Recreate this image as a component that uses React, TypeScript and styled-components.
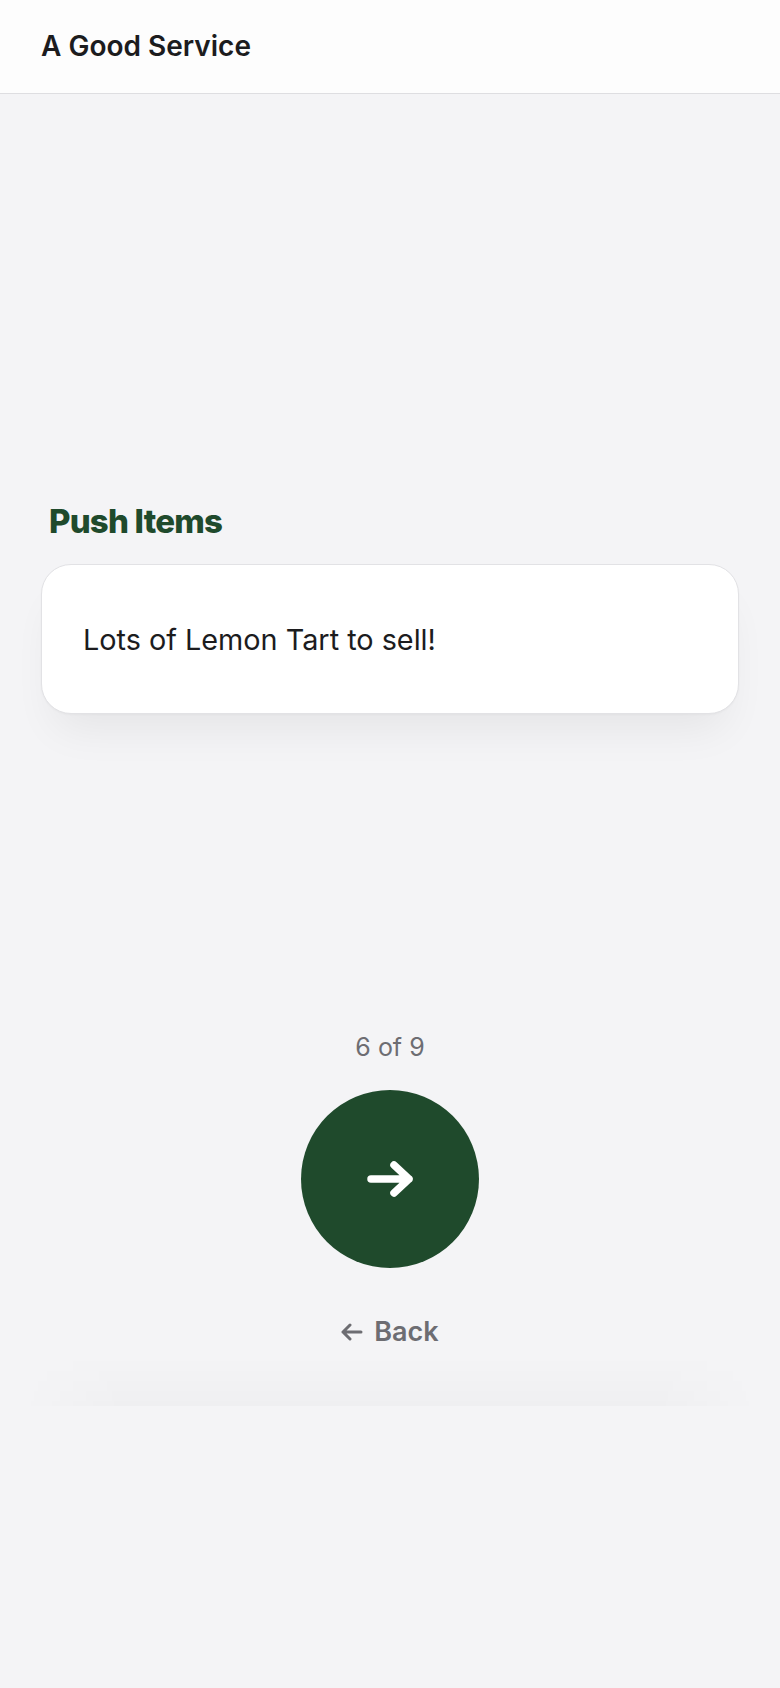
import * as React from 'react';
import styled, { createGlobalStyle } from 'styled-components';

const GlobalStyle = createGlobalStyle`
  html, body {
    margin: 0;
    padding: 0;
    background: #f4f4f6;
  }
  body {
    font-family: Inter, "Noto Sans", "Liberation Sans", sans-serif;
    -webkit-font-smoothing: antialiased;
  }
  * {
    box-sizing: border-box;
  }
`;

const Page = styled.div`
  min-height: 100vh;
  background: #f4f4f6;
  display: flex;
  flex-direction: column;
`;

const Header = styled.header`
  height: 94px;
  display: flex;
  align-items: center;
  padding: 0 41px 2px;
  background: #fdfdfd;
  border-bottom: 1px solid #dedee1;
`;

const Brand = styled.h1`
  margin: 0;
  font-size: 28px;
  font-weight: 600;
  color: #1c1c1e;
`;

const Main = styled.main`
  display: flex;
  flex-direction: column;
  padding: 0 41px;
`;

const Section = styled.section`
  margin-top: 407px;
`;

const SectionTitle = styled.h2`
  margin: 0 0 23px 8px;
  font-size: 33px;
  line-height: 40px;
  font-weight: 800;
  color: #1f4a2c;
  letter-spacing: -0.8px;
`;

const Card = styled.div`
  height: 150px;
  display: flex;
  align-items: center;
  padding: 0 41px;
  background: #ffffff;
  border: 1px solid #e2e2e5;
  border-radius: 30px;
  box-shadow:
    0 1px 2px rgba(0, 0, 0, 0.03),
    0 28px 44px -14px rgba(0, 0, 0, 0.065);
`;

const CardText = styled.p`
  margin: 0;
  font-size: 28.8px;
  line-height: 35px;
  font-weight: 400;
  color: #1c1c1e;
`;

const Stepper = styled.div`
  margin-top: 318px;
  display: flex;
  flex-direction: column;
  align-items: center;
`;

const Count = styled.div`
  font-size: 25px;
  line-height: 30px;
  color: #6d6d72;
`;

const NextButton = styled.button`
  margin-top: 28px;
  width: 178px;
  height: 178px;
  border: none;
  border-radius: 50%;
  background: #1f4a2c;
  display: flex;
  align-items: center;
  justify-content: center;
  padding: 0;
  cursor: pointer;
`;

const BackButton = styled.button`
  margin-top: 47px;
  display: flex;
  align-items: center;
  gap: 11px;
  border: none;
  background: none;
  padding: 0;
  font-family: inherit;
  font-size: 27px;
  line-height: 33px;
  font-weight: 600;
  color: #6d6d72;
  cursor: pointer;
`;

const ShadowEdge = styled.div`
  margin: 8px -20px 0;
  height: 50px;
  background: linear-gradient(180deg, rgba(0, 0, 0, 0) 0%, rgba(0, 0, 0, 0.018) 100%);
  -webkit-mask-image: linear-gradient(90deg, transparent 0%, #000 14%, #000 86%, transparent 100%);
  mask-image: linear-gradient(90deg, transparent 0%, #000 14%, #000 86%, transparent 100%);
`;

const ArrowRight = () => (
  <svg width="60" height="60" viewBox="0 0 60 60" fill="none">
    <path
      d="M11 30h38M34 16l15 14-15 14"
      stroke="#ffffff"
      strokeWidth="7.5"
      strokeLinecap="round"
      strokeLinejoin="round"
    />
  </svg>
);

const ArrowLeft = () => (
  <svg width="22" height="20" viewBox="0 0 22 20" fill="none">
    <path
      d="M20 10H2M9 3L2 10l7 7"
      stroke="#6d6d72"
      strokeWidth="3"
      strokeLinecap="round"
      strokeLinejoin="round"
    />
  </svg>
);

export default function App() {
  const step = 6;
  const total = 9;

  return (
    <>
      <GlobalStyle />
      <Page>
        <Header>
          <Brand>A Good Service</Brand>
        </Header>
        <Main>
          <Section>
            <SectionTitle>Push Items</SectionTitle>
            <Card>
              <CardText>Lots of Lemon Tart to sell!</CardText>
            </Card>
          </Section>
          <Stepper>
            <Count>
              {step} of {total}
            </Count>
            <NextButton aria-label="Next">
              <ArrowRight />
            </NextButton>
            <BackButton>
              <ArrowLeft />
              Back
            </BackButton>
          </Stepper>
          <ShadowEdge />
        </Main>
      </Page>
    </>
  );
}
